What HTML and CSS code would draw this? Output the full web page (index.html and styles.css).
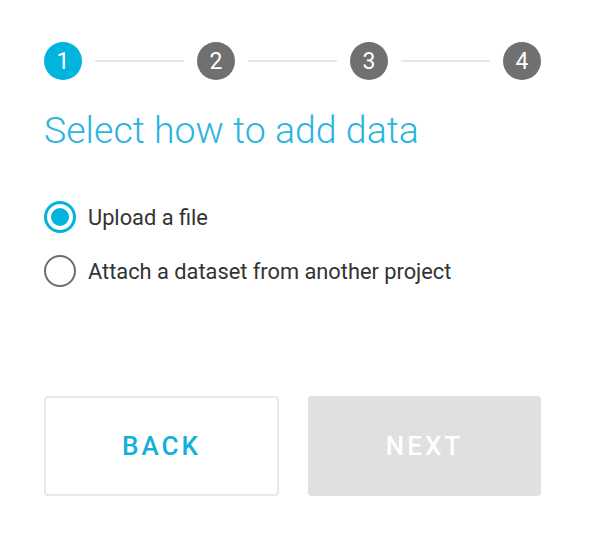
FILE: index.html
```html
<!DOCTYPE html>
<html>
<head>
    <title>Add data</title>
    <link rel="stylesheet" href="styles.css">
</head>
<body>

<div id="wizard">
    <div class="stepper">
        <span class="step step--active">1</span>
        <span class="step__line"></span>
        <span class="step">2</span>
        <span class="step__line"></span>
        <span class="step">3</span>
        <span class="step__line"></span>
        <span class="step">4</span>
    </div>

    <h1 class="wizard__title">Select how to add data</h1>

    <div class="options">
        <label class="option">
            <span class="radio radio--checked"></span>
            <span class="option__label">Upload a file</span>
        </label>
        <label class="option">
            <span class="radio"></span>
            <span class="option__label">Attach a dataset from another project</span>
        </label>
    </div>

    <div class="actions">
        <button class="btn btn--back">BACK</button>
        <button class="btn btn--next" disabled>NEXT</button>
    </div>
</div>

</body>
</html>
```

FILE: styles.css
```css
body {
    margin: 0;
    background: #fff;
    font-family: Roboto, "Liberation Sans", Arial, sans-serif;
}

#wizard {
    padding: 42px 53px 0 44px;
}

/*---------Stepper-------------*/
.stepper {
    display: flex;
    align-items: center;
}

.step {
    width: 38px;
    height: 38px;
    border-radius: 50%;
    background: #707070;
    color: #fff;
    font-size: 23px;
    display: flex;
    align-items: center;
    justify-content: center;
    flex-shrink: 0;
}
.step--active { background: #00b4dd; }

.step__line {
    flex-grow: 1;
    height: 2px;
    background: #e6e6e6;
    margin: 0 13px;
}

/*---------Title-------------*/
.wizard__title {
    margin: 27px 0 0;
    font-size: 37.5px;
    line-height: 46px;
    font-weight: 300;
    color: #2ab4e0;
}

/*---------Options-------------*/
.options {
    margin-top: 48px;
    display: flex;
    flex-direction: column;
    gap: 22px;
}

.option {
    display: flex;
    align-items: center;
    height: 32px;
}

.radio {
    width: 32px;
    height: 32px;
    box-sizing: border-box;
    border: 2px solid #6b6b6b;
    border-radius: 50%;
    margin-right: 12px;
    display: flex;
    align-items: center;
    justify-content: center;
}
.radio--checked {
    border: 3px solid #00b4dd;
}
.radio--checked::after {
    content: "";
    width: 18px;
    height: 18px;
    border-radius: 50%;
    background: #00b4dd;
}

.option__label {
    font-size: 21.8px;
    color: #333;
}

/*---------Buttons-------------*/
.actions {
    margin-top: 109px;
    display: grid;
    grid-template-columns: 235px 1fr;
    gap: 29px;
}

.btn {
    height: 100px;
    border-radius: 4px;
    font-family: Roboto, "Liberation Sans", Arial, sans-serif;
    font-size: 26px;
    font-weight: 500;
    letter-spacing: 3px;
}

.btn--back {
    background: #fff;
    border: 2px solid #e8e8e8;
    color: #12b0da;
}

.btn--next {
    background: #e0e0e0;
    border: none;
    color: #fff;
}
```
